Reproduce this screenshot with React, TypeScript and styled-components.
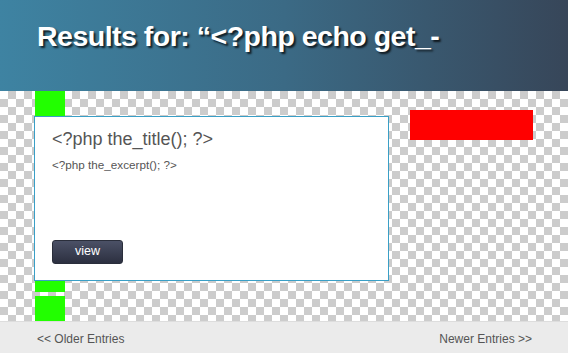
import styled, { createGlobalStyle } from "styled-components";

const GlobalStyle = createGlobalStyle`
  html, body {
    margin: 0;
    padding: 0;
  }
  body {
    font-family: "Liberation Sans", Arial, sans-serif;
    background: #fff;
  }
`;

const Page = styled.div`
  width: 568px;
  height: 353px;
  display: flex;
  flex-direction: column;
  overflow: hidden;
`;

const Header = styled.header`
  height: 91px;
  flex-shrink: 0;
  background: linear-gradient(to right, #3e83a2 0%, #3b6a85 50%, #374659 100%);
  padding: 20px 0 0 37px;
  box-sizing: border-box;
`;

const HeaderTitle = styled.h1`
  margin: 0;
  font-size: 28.5px;
  font-weight: bold;
  letter-spacing: -0.5px;
  color: #fff;
  line-height: 32px;
  white-space: nowrap;
  text-shadow: 2px 2px 2px rgba(0, 0, 0, 0.75);
`;

const Main = styled.main`
  flex: 1;
  display: flex;
  padding-left: 34px;
  background-color: #fff;
  background-image: linear-gradient(45deg, #ccc 25%, transparent 25%, transparent 75%, #ccc 75%),
    linear-gradient(45deg, #ccc 25%, transparent 25%, transparent 75%, #ccc 75%);
  background-size: 16px 16px;
  background-position: 0 0, 8px 8px;
`;

const Column = styled.div`
  width: 355px;
  display: flex;
  flex-direction: column;
`;

const Marker = styled.div<{ $h: number; $gap?: number }>`
  width: 30px;
  height: ${({ $h }) => $h}px;
  margin-left: 1px;
  margin-top: ${({ $gap }) => $gap ?? 0}px;
  background: #22ff00;
`;

const Card = styled.article`
  height: 165px;
  box-sizing: border-box;
  border: 1px solid #3a9fc6;
  background: #fff;
  padding: 11px 17px 16px;
  display: flex;
  flex-direction: column;
`;

const PostTitle = styled.h2`
  margin: 0;
  font-size: 18px;
  font-weight: normal;
  color: #555;
  line-height: 22px;
`;

const Excerpt = styled.p`
  margin: 8px 0 0;
  font-size: 11.7px;
  color: #555;
  line-height: 14px;
`;

const ViewButton = styled.button`
  margin-top: auto;
  width: 71px;
  height: 24px;
  border: 1px solid #2a2e3b;
  border-radius: 3px;
  background: linear-gradient(to bottom, #4b5166 0%, #2c3040 100%);
  color: #fff;
  font-family: "Liberation Sans", Arial, sans-serif;
  font-size: 12.5px;
  padding: 0 0 2px;
  cursor: pointer;
`;

const Aside = styled.aside`
  padding: 19px 0 0 21px;
`;

const RedBox = styled.div`
  width: 123px;
  height: 30px;
  background: #ff0000;
`;

const Footer = styled.footer`
  height: 32px;
  flex-shrink: 0;
  background: #ebebeb;
  border-top: 1px solid #ddd;
  box-sizing: border-box;
  display: flex;
  align-items: center;
  justify-content: space-between;
  padding: 2px 36px 0 37px;
`;

const NavLink = styled.a`
  font-size: 12px;
  color: #555;
  text-decoration: none;
`;

export default function App() {
  return (
    <>
      <GlobalStyle />
      <Page>
        <Header>
          <HeaderTitle>Results for: “&lt;?php echo get_-</HeaderTitle>
        </Header>
        <Main>
          <Column>
            <Marker $h={25} />
            <Card>
              <PostTitle>&lt;?php the_title(); ?&gt;</PostTitle>
              <Excerpt>&lt;?php the_excerpt(); ?&gt;</Excerpt>
              <ViewButton>view</ViewButton>
            </Card>
            <Marker $h={11} />
            <Marker $h={25} $gap={4} />
          </Column>
          <Aside>
            <RedBox />
          </Aside>
        </Main>
        <Footer>
          <NavLink href="#">&lt;&lt; Older Entries</NavLink>
          <NavLink href="#">Newer Entries &gt;&gt;</NavLink>
        </Footer>
      </Page>
    </>
  );
}
